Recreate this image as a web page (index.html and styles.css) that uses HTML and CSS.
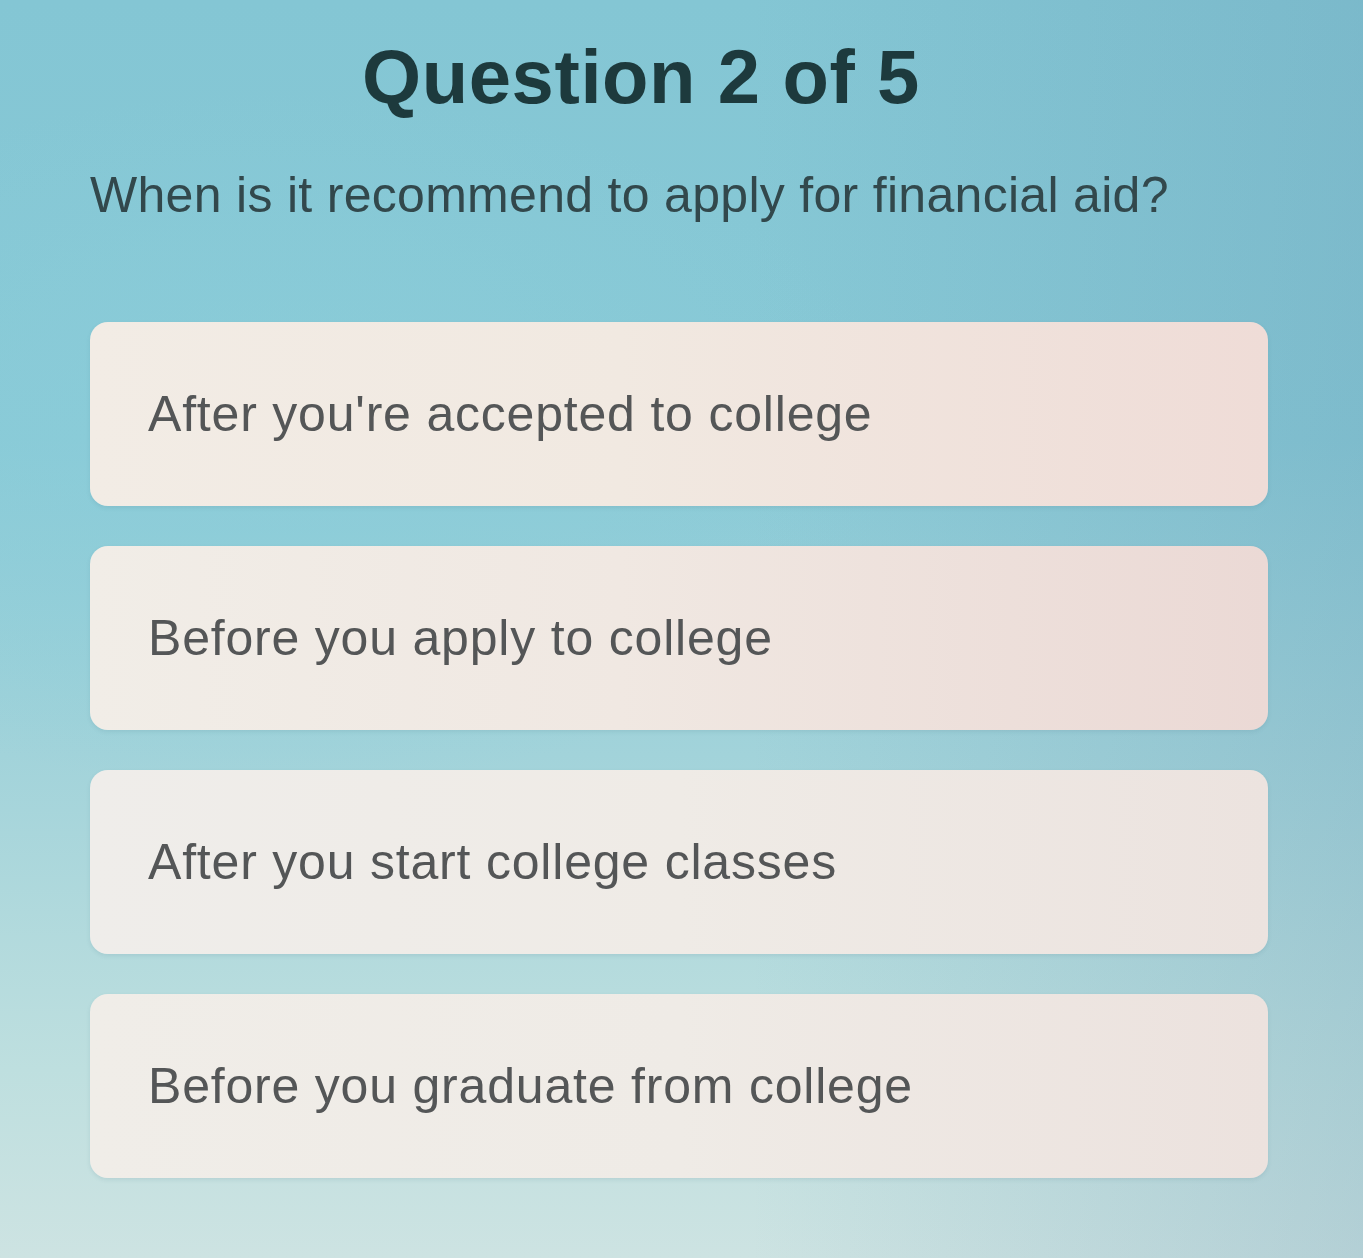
FILE: index.html
```html
<!DOCTYPE html>
<html lang="en">
<head>
<meta charset="utf-8">
<title>Question 2 of 5</title>
<link rel="stylesheet" href="styles.css">
</head>
<body>
<main class="quiz">
  <h1 class="quiz-title">Question 2 of 5</h1>
  <p class="quiz-question">When is it recommend to apply for financial aid?</p>
  <div class="options">
    <button class="option option-a">After you're accepted to college</button>
    <button class="option option-b">Before you apply to college</button>
    <button class="option option-c">After you start college classes</button>
    <button class="option option-d">Before you graduate from college</button>
  </div>
</main>
</body>
</html>
```
FILE: styles.css
```css
html, body {
  margin: 0;
  padding: 0;
}
body {
  width: 1363px;
  height: 1258px;
  overflow: hidden;
  font-family: "Liberation Sans", Arial, sans-serif;
  background:
    radial-gradient(ellipse 900px 500px at 20% 35%, rgba(140, 206, 218, 0.7), rgba(140, 206, 218, 0) 70%),
    linear-gradient(90deg, rgba(0,0,0,0) 55%, rgba(90, 140, 170, 0.22) 100%),
    linear-gradient(180deg, #84c6d4 0%, #88c9d6 35%, #a2d3da 60%, #bedfdf 85%, #cde3e2 100%);
}
.quiz {
  display: flex;
  flex-direction: column;
  padding: 33px 95px 0 90px;
}
.quiz-title {
  margin: 0 0 0 272px;
  font-size: 76px;
  line-height: 88px;
  font-weight: 700;
  color: #1d3a3d;
  letter-spacing: 0.6px;
}
.quiz-question {
  margin: 44px 0 0 0;
  font-size: 50px;
  line-height: 60px;
  color: #32484c;
  letter-spacing: 0.3px;
}
.options {
  display: flex;
  flex-direction: column;
  gap: 40px;
  margin-top: 97px;
}
.option {
  display: flex;
  align-items: center;
  height: 184px;
  padding: 0 0 0 58px;
  border: none;
  border-radius: 18px;
  font-family: "Liberation Sans", Arial, sans-serif;
  font-size: 50px;
  letter-spacing: 0.8px;
  color: #545657;
  text-align: left;
  box-shadow: 0 2px 4px rgba(60, 110, 120, 0.12);
}
.option-a {
  background: linear-gradient(90deg, #f2ece5 0%, #f1e9e1 45%, #efdcd7 100%);
}
.option-b {
  background: linear-gradient(90deg, #f1ede7 0%, #f0e8e2 45%, #ebd9d5 100%);
}
.option-c {
  background: linear-gradient(90deg, #efedea 0%, #efebe6 50%, #ece3df 100%);
}
.option-d {
  background: linear-gradient(90deg, #f0ede8 0%, #efebe6 50%, #ece2de 100%);
}
```
